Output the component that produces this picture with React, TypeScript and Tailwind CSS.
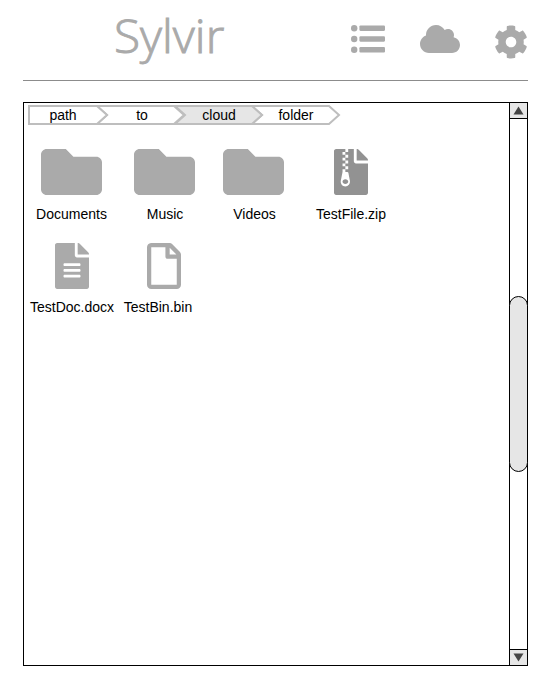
import type { ReactNode } from 'react';
import { FaCloud, FaCog, FaFileAlt, FaFileArchive, FaFolder, FaRegFile } from 'react-icons/fa';

function Item({ label, className, children }: { label: string; className: string; children: ReactNode }) {
  return (
    <div className={`flex shrink-0 flex-col items-center ${className}`}>
      {children}
      <span className="mt-auto whitespace-nowrap text-[14px] leading-4">{label}</span>
    </div>
  );
}

function Folder({ className = '' }: { className?: string }) {
  return (
    <FaFolder
      viewBox="0 64 512 384"
      preserveAspectRatio="none"
      className={`h-[46px] w-[61px] text-[#aaaaaa] ${className}`}
    />
  );
}

function ListIcon() {
  return (
    <svg className="mt-[25px] h-7 w-[34px]" viewBox="0 0 34 28" fill="currentColor">
      {[3.2, 14, 24.8].map((y) => (
        <g key={y}>
          <circle cx="3.2" cy={y} r="3.2" />
          <rect x="8.4" y={y - 2.7} width="25.6" height="5.4" rx="1.1" />
        </g>
      ))}
    </svg>
  );
}

function Breadcrumb() {
  return (
    <nav className="relative ml-1 mt-0.5 h-5 w-[314px] text-[14px] leading-5">
      <svg className="absolute inset-0" width="314" height="20" fill="white" stroke="#bebebe" strokeWidth="2">
        <path d="M224 1H301L311 10L301 19H224L234 10Z" />
        <path d="M147 1H224L234 10L224 19H147L157 10Z" fill="#e6e6e6" />
        <path d="M69 1H146L156 10L146 19H69L79 10Z" />
        <path d="M1 1H69L79 10L69 19H1Z" />
      </svg>
      <div className="relative flex text-center">
        <span className="w-[70px]">path</span>
        <span className="w-[88px]">to</span>
        <span className="w-[66px]">cloud</span>
        <span className="w-[88px]">folder</span>
      </div>
    </nav>
  );
}

function Scrollbar() {
  return (
    <div className="flex w-[18px] shrink-0 flex-col border-l border-black">
      <div className="flex h-4 items-center justify-center border-b border-black bg-[#e6e6e6]">
        <svg width="11" height="9" fill="#444"><path d="M5.5 0.5L10.5 8.5H0.5Z" /></svg>
      </div>
      <div className="flex-1">
        <div className="-ml-px -mr-px mt-[177px] h-[176px] rounded-full border border-black bg-[#e6e6e6]" />
      </div>
      <div className="flex h-4 items-center justify-center border-t border-black bg-[#e6e6e6]">
        <svg width="11" height="9" fill="#444"><path d="M5.5 8.5L10.5 0.5H0.5Z" /></svg>
      </div>
    </div>
  );
}

export default function App() {
  return (
    <div className="h-[695px] w-[551px] bg-white pl-[23px] pr-[23px] font-['Liberation_Sans',Arial,sans-serif] text-black">
      <header className="flex h-[81px] border-b border-[#8c8c8c] text-[#aaaaaa]">
        <h1 className="ml-[91px] mt-px h-[68px] w-[237px] origin-left scale-x-[1.04] whitespace-nowrap font-['Open_Sans',sans-serif] text-[46px] font-light leading-[68px] [-webkit-text-stroke:0.9px_#aaaaaa]">
          Sylvir
        </h1>
        <div className="flex">
          <ListIcon />
          <FaCloud viewBox="0 32 640 448" className="ml-[35px] mt-[25px] h-[28px] w-[40px]" />
          <FaCog className="ml-[34px] mt-[25px] h-[34px] w-[34px]" />
        </div>
      </header>
      <main className="mt-[21px] flex h-[564px] w-[505px] border border-black">
        <section className="flex-1">
          <Breadcrumb />
          <div className="mt-6 flex h-[73px]">
            <Item label="Documents" className="w-[95px]"><Folder /></Item>
            <Item label="Music" className="w-[92px]"><Folder className="mr-px" /></Item>
            <Item label="Videos" className="w-[87px]"><Folder className="mr-0.5" /></Item>
            <Item label="TestFile.zip" className="ml-[6px] w-[94px]">
              <FaFileArchive className="h-[46px] w-[34px] text-[#929292]" preserveAspectRatio="none" />
            </Item>
          </div>
          <div className="mt-[21px] flex h-[72px]">
            <Item label="TestDoc.docx" className="w-24">
              <FaFileAlt className="h-[46px] w-[34px] text-[#aaaaaa]" preserveAspectRatio="none" />
            </Item>
            <Item label="TestBin.bin" className="ml-[-2px] w-20">
              <FaRegFile className="ml-[12px] h-[46px] w-[34px] text-[#aaaaaa]" preserveAspectRatio="none" />
            </Item>
          </div>
        </section>
        <Scrollbar />
      </main>
    </div>
  );
}
